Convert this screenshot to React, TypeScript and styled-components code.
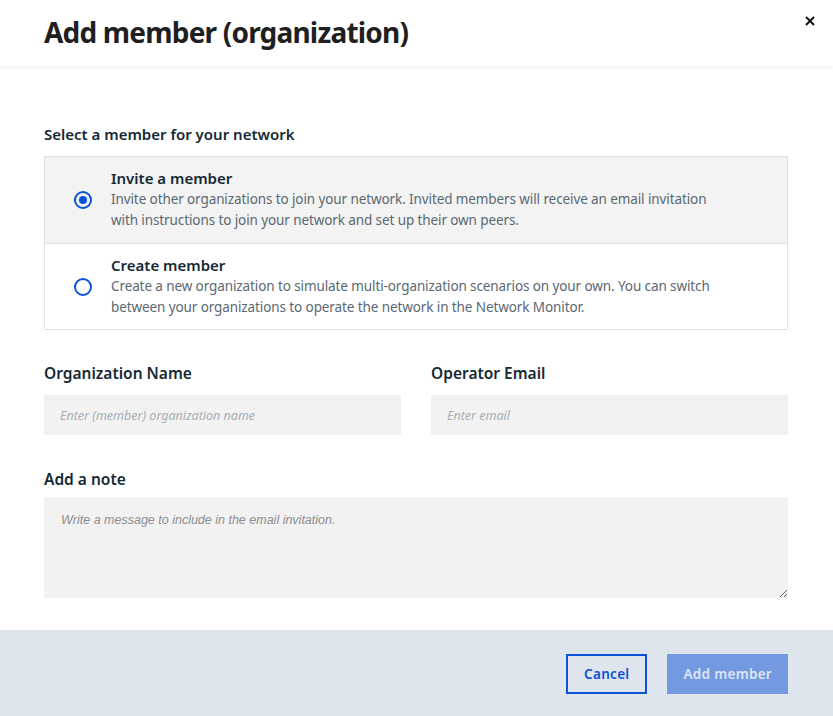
import React from "react";
import styled, { createGlobalStyle } from "styled-components";

const Global = createGlobalStyle`
  html, body { margin: 0; padding: 0; background: #ffffff; }
  body { font-family: "Noto Sans", "Open Sans", sans-serif; color: #152935; }
  * { box-sizing: border-box; }
`;

const Modal = styled.div`
  width: 833px;
  height: 716px;
  display: flex;
  flex-direction: column;
  background: #ffffff;
`;

const Header = styled.header`
  height: 66px;
  flex: none;
  display: flex;
  align-items: flex-start;
  justify-content: space-between;
  padding: 13px 16px 0 44px;
  box-shadow: 0 2px 3px rgba(0, 0, 0, 0.06);
  position: relative;
  z-index: 1;
`;

const Title = styled.h1`
  margin: 0;
  font-size: 28px;
  font-weight: 700;
  letter-spacing: -0.8px;
  color: #1f1f1f;
  line-height: 38px;
`;

const Close = styled.button`
  border: 0;
  background: none;
  padding: 0;
  margin-top: 1px;
  width: 14px;
  height: 14px;
  display: flex;
  align-items: center;
  justify-content: center;
  cursor: pointer;
`;

const Body = styled.main`
  flex: 1;
  padding: 58px 45px 0 44px;
  display: flex;
  flex-direction: column;
`;

const SectionLabel = styled.div`
  font-size: 15px;
  font-weight: 600;
  line-height: 20px;
  color: #152935;
  margin-bottom: 12px;
`;

const RadioGroup = styled.div`
  border: 1px solid #dfe3e6;
  display: flex;
  flex-direction: column;
`;

const Option = styled.label<{ $selected?: boolean }>`
  display: flex;
  align-items: center;
  gap: 19px;
  padding: 12px 16px 12px 29px;
  height: 86px;
  background: ${(p) => (p.$selected ? "#f3f3f3" : "#ffffff")};
  & + & {
    border-top: 1px solid #dfe3e6;
  }
`;

const Radio = styled.span<{ $checked?: boolean }>`
  width: 18px;
  height: 18px;
  border-radius: 50%;
  border: 2px solid #0b52d9;
  flex: none;
  display: flex;
  align-items: center;
  justify-content: center;
  &::after {
    content: "";
    width: 8px;
    height: 8px;
    border-radius: 50%;
    background: ${(p) => (p.$checked ? "#0b52d9" : "transparent")};
  }
`;

const OptionText = styled.div`
  display: flex;
  flex-direction: column;
`;

const OptionTitle = styled.div`
  font-size: 15px;
  font-weight: 600;
  color: #152935;
  line-height: 20px;
  margin-top: -1px;
  margin-bottom: 1px;
`;

const OptionDesc = styled.div`
  font-size: 13.5px;
  letter-spacing: -0.1px;
  color: #5a6872;
  line-height: 21px;
  max-width: 610px;
`;

const FieldRow = styled.div`
  display: grid;
  grid-template-columns: 357px 357px;
  column-gap: 30px;
  margin-top: 33px;
`;

const Field = styled.div`
  display: flex;
  flex-direction: column;
`;

const FieldLabel = styled.div`
  font-size: 15.5px;
  font-weight: 600;
  line-height: 20px;
  color: #152935;
  margin-bottom: 12px;
`;

const Input = styled.input`
  height: 40px;
  border: 0;
  background: #f2f2f2;
  padding: 0 16px;
  font-family: "Noto Sans", sans-serif;
  font-size: 12.5px;
  font-style: italic;
  outline: none;
  &::placeholder {
    color: #a7aeb3;
  }
`;

const NoteField = styled(Field)`
  margin-top: 34px;
`;

const NoteLabel = styled(FieldLabel)`
  margin-bottom: 8px;
`;

const TextArea = styled.textarea`
  height: 101px;
  border: 0;
  background: #f2f2f2;
  padding: 16px 17px;
  font-family: "Liberation Sans", Arial, sans-serif;
  font-size: 12.5px;
  font-style: italic;
  resize: vertical;
  outline: none;
  &::placeholder {
    color: #8d8d8d;
  }
`;

const Footer = styled.footer`
  height: 86px;
  flex: none;
  background: #dfe5ec;
  display: flex;
  align-items: center;
  justify-content: flex-end;
  gap: 20px;
  padding: 0 45px 0 44px;
`;

const Button = styled.button<{ $primary?: boolean }>`
  height: 40px;
  padding: 0 ${(p) => (p.$primary ? "14px" : "16px")};
  margin-top: 2px;
  font-family: "Noto Sans", sans-serif;
  font-size: 13.5px;
  font-weight: 600;
  letter-spacing: 0.3px;
  border: 2px solid ${(p) => (p.$primary ? "#7399e0" : "#0b52d9")};
  background: ${(p) => (p.$primary ? "#7399e0" : "transparent")};
  color: ${(p) => (p.$primary ? "#dde6f7" : "#0b52d9")};
  cursor: pointer;
`;

export default function App() {
  return (
    <Modal>
      <Global />
      <Header>
        <Title>Add member (organization)</Title>
        <Close aria-label="Close">
          <svg width="10" height="10" viewBox="0 0 10 10">
            <path d="M1 1 L9 9 M9 1 L1 9" stroke="#111" strokeWidth="2" />
          </svg>
        </Close>
      </Header>
      <Body>
        <SectionLabel>Select a member for your network</SectionLabel>
        <RadioGroup>
          <Option $selected>
            <Radio $checked />
            <OptionText>
              <OptionTitle>Invite a member</OptionTitle>
              <OptionDesc>
                Invite other organizations to join your network. Invited members will receive an email invitation
                with instructions to join your network and set up their own peers.
              </OptionDesc>
            </OptionText>
          </Option>
          <Option>
            <Radio />
            <OptionText>
              <OptionTitle>Create member</OptionTitle>
              <OptionDesc>
                Create a new organization to simulate multi-organization scenarios on your own. You can switch
                between your organizations to operate the network in the Network Monitor.
              </OptionDesc>
            </OptionText>
          </Option>
        </RadioGroup>
        <FieldRow>
          <Field>
            <FieldLabel>Organization Name</FieldLabel>
            <Input placeholder="Enter (member) organization name" />
          </Field>
          <Field>
            <FieldLabel>Operator Email</FieldLabel>
            <Input placeholder="Enter email" />
          </Field>
        </FieldRow>
        <NoteField>
          <NoteLabel>Add a note</NoteLabel>
          <TextArea placeholder="Write a message to include in the email invitation." />
        </NoteField>
      </Body>
      <Footer>
        <Button>Cancel</Button>
        <Button $primary>Add member</Button>
      </Footer>
    </Modal>
  );
}
